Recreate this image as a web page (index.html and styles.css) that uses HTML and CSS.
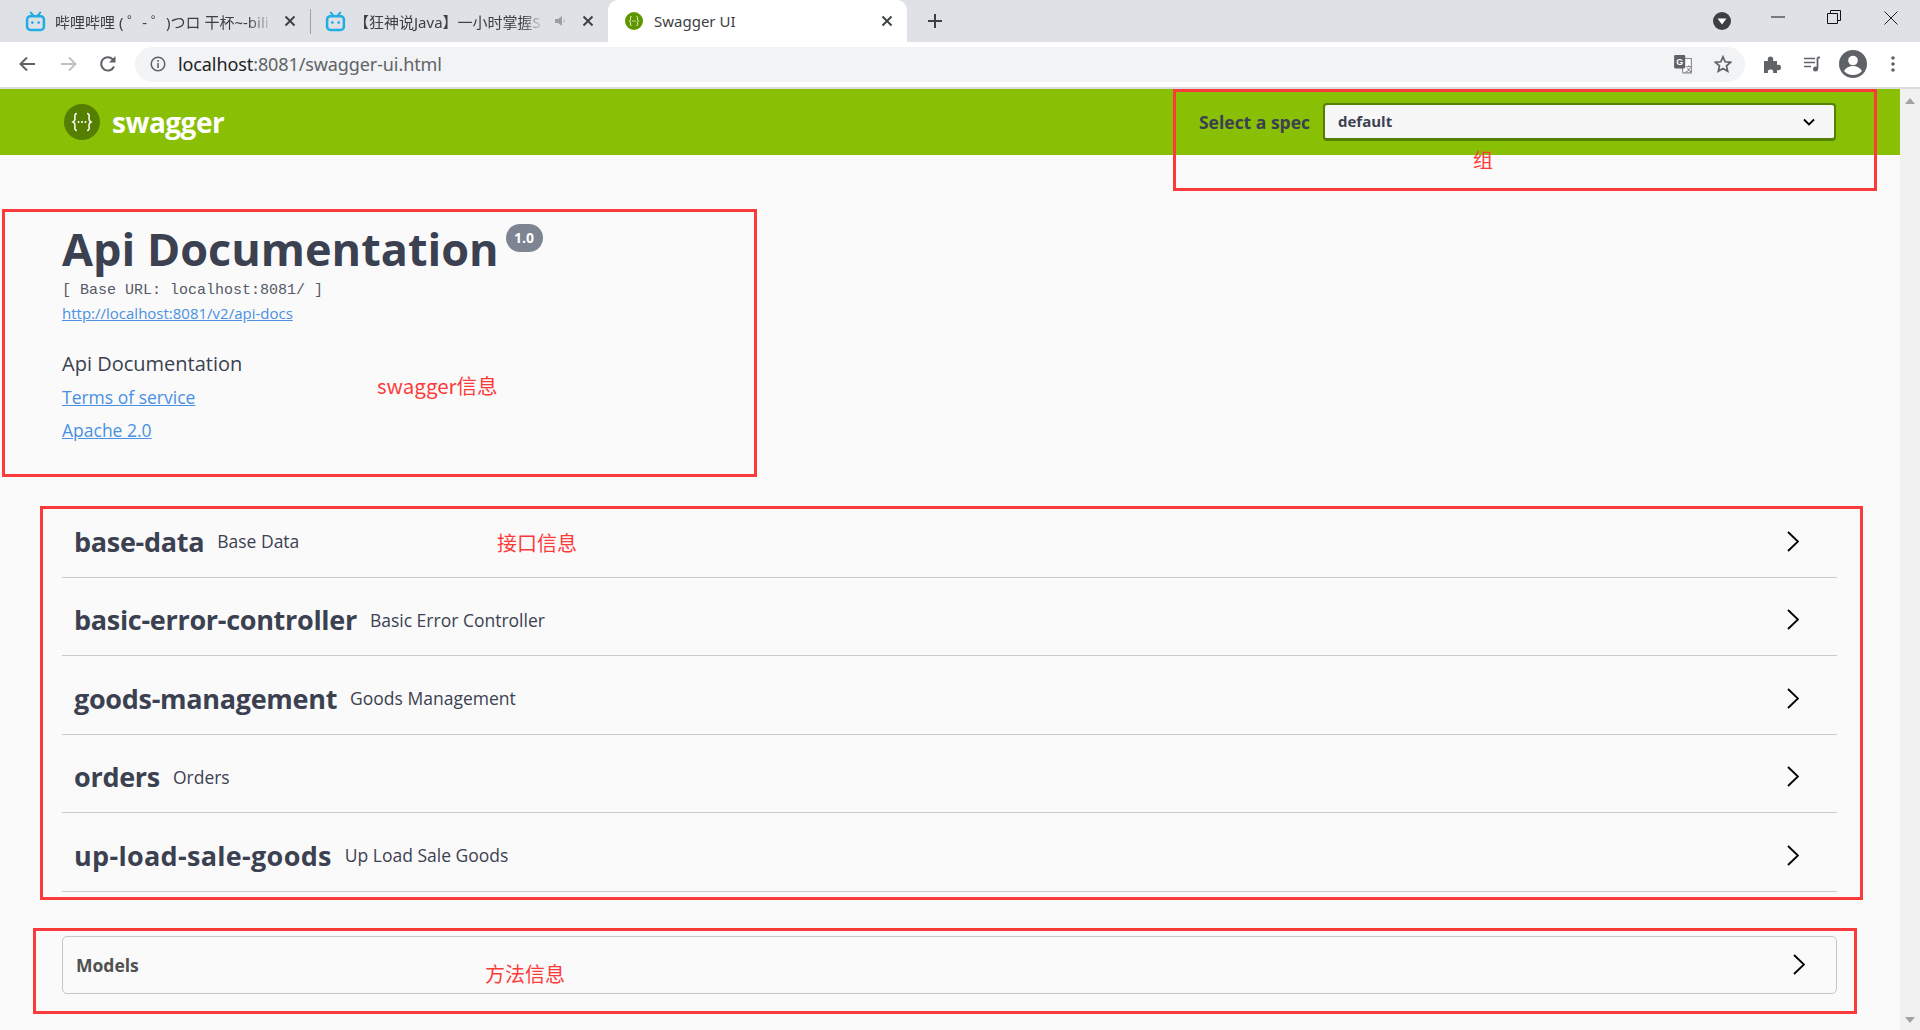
FILE: index.html
```html
<!DOCTYPE html>
<html lang="zh-CN">
<head>
<meta charset="utf-8">
<title>Swagger UI</title>
<link rel="stylesheet" href="styles.css">
</head>
<body>
<svg class="defs" width="0" height="0" aria-hidden="true">
  <symbol id="bili" viewBox="0 0 20 20">
    <path d="M5.5 1.5 8 4.5M14.5 1.5 12 4.5" fill="none" stroke="#23ade5" stroke-width="2" stroke-linecap="round"/>
    <rect x="2" y="5" width="16" height="13" rx="3" fill="none" stroke="#23ade5" stroke-width="2.4"/>
    <circle cx="7" cy="11" r="1.3" fill="#23ade5"/><circle cx="13" cy="11" r="1.3" fill="#23ade5"/>
  </symbol>
  <symbol id="close" viewBox="0 0 12 12">
    <path d="M1.5 1.5 10.500 10.500M10.500 1.500 1.500 10.500" fill="none" stroke="#3c4043" stroke-width="1.9"/>
  </symbol>
  <symbol id="chev" viewBox="0 0 12 21">
    <path d="M1 1 11 10.500 1 20" fill="none" stroke="#000" stroke-width="1.9"/>
  </symbol>
</svg>

<div class="tabstrip">
  <div class="tab tab-first">
    <svg class="fav"><use href="#bili"/></svg>
    <span class="tab-title">哔哩哔哩 ( ゜- ゜)つロ 干杯~-bili</span>
    <svg class="tab-close"><use href="#close"/></svg>
  </div>
  <div class="tab-sep"></div>
  <div class="tab tab-second">
    <svg class="fav"><use href="#bili"/></svg>
    <span class="tab-title">【狂神说Java】一小时掌握S</span>
    <svg class="speaker" viewBox="0 0 14 14"><path d="M1 5h3l4-3v10L4 9H1z" fill="#9aa0a6"/><path d="M10 5v4" stroke="#c4c7cb" stroke-width="1.500"/></svg>
    <svg class="tab-close"><use href="#close"/></svg>
  </div>
  <div class="tab tab-active">
    <svg class="fav-sw" viewBox="0 0 18 18"><circle cx="9" cy="9" r="9" fill="#5f9600"/><path d="M6.500 4.500C5 4.500 5.500 6 5.500 7.500 5.500 8.500 4.500 9 4.500 9s1 .5 1 1.500c0 1.500-.5 3 1 3M11.500 4.500c1.500 0 1 1.500 1 3 0 1 1 1.500 1 1.500s-1 .5-1 1.500c0 1.500.5 3-1 3" fill="none" stroke="#fff" stroke-width="1"/><path d="M7.400 9h.8M8.600 9h.8M9.800 9h.8" stroke="#fff"/></svg>
    <span class="tab-title plain">Swagger UI</span>
    <svg class="tab-close"><use href="#close"/></svg>
  </div>
  <svg class="newtab" viewBox="0 0 14 14"><path d="M7 0v14M0 7h14" stroke="#3c4043" stroke-width="2"/></svg>
  <div class="spring"></div>
  <div class="tabsearch"><svg viewBox="0 0 18 18"><circle cx="9" cy="9" r="9" fill="#3c4043"/><path d="M4.500 6.500h9L9 12.500z" fill="#fff"/></svg></div>
  <div class="winbtn">
    <svg viewBox="0 0 14 14" class="win-min"><path d="M0 7h14" stroke="#111" stroke-width="1"/></svg>
  </div>
  <div class="winbtn">
    <svg viewBox="0 0 14 14" class="win-max"><path d="M.5 3.500h10v10H.5zM3.500 3.500V.5h10v10h-3" fill="none" stroke="#111"/></svg>
  </div>
  <div class="winbtn">
    <svg viewBox="0 0 14 14" class="win-close"><path d="M.5.500l13 13M13.500.5l-13 13" stroke="#222" stroke-width="1"/></svg>
  </div>
</div>

<div class="toolbar">
  <svg class="nav nav-back" viewBox="0 0 18 18"><path d="M17 9H3M9 2.500 2.500 9 9 15.500" fill="none" stroke="#5f6368" stroke-width="2"/></svg>
  <svg class="nav nav-fwd" viewBox="0 0 18 18"><path d="M1 9h14M9 2.500 15.500 9 9 15.500" fill="none" stroke="#bdc1c6" stroke-width="2"/></svg>
  <svg class="nav nav-reload" viewBox="0 0 18 18"><path d="M15 11.500A6.700 6.700 0 1 1 13.700 4.200L15.500 6" fill="none" stroke="#5f6368" stroke-width="2"/><path d="M16.500 1v6.500H10z" fill="#5f6368"/></svg>
  <div class="omnibox">
    <svg class="site-info" viewBox="0 0 16 16"><circle cx="8" cy="8" r="6.800" fill="none" stroke="#5f6368" stroke-width="1.500"/><path d="M8 7v5M8 4v1.700" stroke="#5f6368" stroke-width="1.600"/></svg>
    <span class="url"><b>localhost</b>:8081/swagger-ui.html</span>
    <svg class="omni-ic omni-tr" viewBox="0 0 18 18"><path d="M7 4h9.500v13H9z" fill="#fff" stroke="#80868b"/><rect x="1" y="1" width="10" height="12" rx="1" fill="#5f6368"/><text x="3" y="10" class="tr-g">G</text><text x="11" y="15" class="tr-t">文</text></svg>
    <svg class="omni-ic omni-star" viewBox="0 0 18 18"><path d="M9 1.800 11.200 6.800l5.400.5-4.100 3.600 1.200 5.300L9 13.400l-4.700 2.800 1.200-5.300L1.400 7.300l5.400-.5z" fill="none" stroke="#5f6368" stroke-width="1.700"/></svg>
  </div>
  <svg class="tool tool-puzzle" viewBox="0 0 18 18"><path d="M1 6h4c-.800-3 .5-4.500 2.500-4.500S10.800 3 10 6h4v4c3-.8 4 .5 4 2.500s-1 3.300-4 2.500v3h-4c.8-2.500-.5-3.500-2.500-3.500S4.300 15.500 5 18H1z" fill="#5f6368"/></svg>
  <svg class="tool tool-media" viewBox="0 0 18 18"><path d="M1 3.500h11M1 7.500h11M1 11.500h7" stroke="#5f6368" stroke-width="1.700"/><path d="M14.500 2.500v11" stroke="#5f6368" stroke-width="1.800"/><path d="M14.500 2.500H17" stroke="#5f6368" stroke-width="1.800"/><circle cx="12.500" cy="14" r="2.500" fill="#5f6368"/></svg>
  <svg class="tool tool-profile" viewBox="0 0 28 28"><circle cx="14" cy="14" r="13" fill="#5f6368" stroke="#5f6368" stroke-width="2"/><circle cx="14" cy="10.500" r="4.800" fill="#fff"/><path d="M5 21c2-3.500 5.500-5 9-5s7 1.500 9 5c-2.200 2.500-5.500 4-9 4s-6.800-1.500-9-4z" fill="#fff"/></svg>
  <svg class="tool tool-kebab" viewBox="0 0 4 18"><circle cx="2" cy="3" r="1.800" fill="#5f6368"/><circle cx="2" cy="9" r="1.800" fill="#5f6368"/><circle cx="2" cy="15" r="1.800" fill="#5f6368"/></svg>
</div>

<div class="viewport">
  <main class="page">
    <header class="topbar">
      <div class="brand">
        <svg class="logo" viewBox="0 0 36 36"><circle cx="18" cy="18" r="18" fill="#547f00"/><path d="M13 9.500c-3 0-2 3-2 5.500 0 2-2 3-2 3s2 1 2 3c0 2.500-1 5.500 2 5.500M23 9.500c3 0 2 3 2 5.500 0 2 2 3 2 3s-2 1-2 3c0 2.500 1 5.500-2 5.500" fill="none" stroke="#fff" stroke-width="1.500"/><circle cx="14.500" cy="18" r="1" fill="#fff"/><circle cx="18" cy="18" r="1" fill="#fff"/><circle cx="21.500" cy="18" r="1" fill="#fff"/></svg>
        <span class="brand-name">swagger</span>
      </div>
      <div class="spec">
        <span class="spec-label">Select a spec</span>
        <div class="spec-select">
          <span class="spec-value">default</span>
          <svg class="spec-caret" viewBox="0 0 12 8"><path d="M1 1.500 6 6.500l5-5" fill="none" stroke="#000" stroke-width="1.800"/></svg>
        </div>
      </div>
    </header>

    <section class="api-info">
      <div class="title-line">
        <h1 class="title">Api Documentation</h1>
        <span class="version">1.0</span>
      </div>
      <div class="base-url">[ Base URL: localhost:8081/ ]</div>
      <a class="link link-small" href="#">http://localhost:8081/v2/api-docs</a>
      <p class="desc">Api Documentation</p>
      <a class="link link-big" href="#">Terms of service</a>
      <a class="link link-big" href="#">Apache 2.0</a>
    </section>

    <section class="tags">
      <div class="tag"><span class="tag-name">base-data</span><span class="tag-desc">Base Data</span><svg class="chev"><use href="#chev"/></svg></div>
      <div class="tag"><span class="tag-name">basic-error-controller</span><span class="tag-desc">Basic Error Controller</span><svg class="chev"><use href="#chev"/></svg></div>
      <div class="tag"><span class="tag-name">goods-management</span><span class="tag-desc">Goods Management</span><svg class="chev"><use href="#chev"/></svg></div>
      <div class="tag"><span class="tag-name">orders</span><span class="tag-desc">Orders</span><svg class="chev"><use href="#chev"/></svg></div>
      <div class="tag"><span class="tag-name tag-name-wide">up-load-sale-goods</span><span class="tag-desc">Up Load Sale Goods</span><svg class="chev"><use href="#chev"/></svg></div>
    </section>

    <section class="models">
      <span class="models-title">Models</span>
      <svg class="chev"><use href="#chev"/></svg>
    </section>

    <div class="mark mark-group"></div>
    <div class="mark mark-info"></div>
    <div class="mark mark-api"></div>
    <div class="mark mark-models"></div>
    <span class="note note-group">组</span>
    <span class="note note-info">swagger信息</span>
    <span class="note note-api">接口信息</span>
    <span class="note note-models">方法信息</span>
  </main>
  <aside class="scrollbar">
    <span class="arrow arrow-up"></span>
    <span class="arrow arrow-down"></span>
  </aside>
</div>
</body>
</html>
```

FILE: styles.css
```css
* { box-sizing: border-box; }
html, body { margin: 0; padding: 0; height: 100%; overflow: hidden; }
body {
  font-family: "Open Sans", "Noto Sans CJK SC", sans-serif;
  color: #3b4151;
  background: #fff;
  display: flex;
  flex-direction: column;
  height: 1030px;
}
.defs { position: absolute; }

/* Browser tab strip */
.tabstrip {
  height: 42px;
  flex: none;
  background: #dee1e6;
  display: flex;
  align-items: center;
}
.tab {
  height: 42px;
  display: flex;
  align-items: center;
  flex: none;
  font-family: "Noto Sans", "Noto Sans CJK SC", sans-serif;
  font-size: 15px;
  color: #3c4043;
}
.tab-first { width: 300px; margin-left: 10px; padding: 0 14px 0 15px; }
.tab-second { width: 297px; padding: 0 14px 0 14px; }
.tab-sep { width: 1px; height: 25px; background: #9aa0a6; flex: none; }
.tab-active {
  width: 299px;
  padding: 0 14px 0 17px;
  background: #fff;
  border-radius: 10px 10px 0 0;
}
.fav { width: 21px; height: 21px; flex: none; }
.fav-sw { width: 18px; height: 18px; flex: none; }
.tab-title {
  flex: 1;
  white-space: nowrap;
  margin-left: 9px;
  -webkit-mask-image: linear-gradient(to right, #000 88%, transparent 100%);
  mask-image: linear-gradient(to right, #000 88%, transparent 100%);
}
.tab-title.plain { margin-left: 11px; -webkit-mask-image: none; mask-image: none; }
.tab-first .tab-title { margin-right: 10px; }
.tab-second .tab-title { margin-left: 8px; margin-right: 10px; }
.speaker { width: 14px; height: 14px; flex: none; margin-right: 14px; }
.tab-close { width: 12px; height: 12px; flex: none; }
.newtab { width: 14px; height: 14px; margin-left: 21px; flex: none; }
.spring { flex: 1; }
.tabsearch { width: 18px; height: 18px; margin-right: 19px; }
.tabsearch svg { width: 18px; height: 18px; display: block; }
.winbtn { width: 56px; height: 42px; display: flex; align-items: center; justify-content: center; flex: none; }
.winbtn svg { width: 14px; height: 14px; display: block; margin-bottom: 8px; }
.winbtn:last-child { width: 58px; }
.winbtn .win-close { margin-bottom: 6px; }

/* Browser toolbar */
.toolbar {
  height: 47px;
  flex: none;
  background: #fff;
  border-bottom: 2px solid #dadce0;
  display: flex;
  align-items: center;
  padding-bottom: 1px;
}
.nav { width: 18px; height: 18px; flex: none; }
.nav-back { margin-left: 18px; }
.nav-fwd { margin-left: 24px; }
.nav-reload { margin-left: 21px; }
.omnibox {
  flex: none;
  width: 1610px;
  height: 35px;
  margin-left: 18px;
  border-radius: 18px;
  background: #f1f3f4;
  display: flex;
  align-items: center;
  padding-left: 15px;
}
.site-info { width: 16px; height: 16px; flex: none; }
.url {
  margin-left: 12px;
  flex: 1;
  font-family: "Noto Sans", sans-serif;
  font-size: 18px;
  letter-spacing: -0.1px;
  color: #5f6368;
}
.url b { font-weight: 400; color: #202124; }
.omni-ic { flex: none; }
.omni-tr { width: 20px; height: 20px; margin-right: 21px; }
.omni-star { width: 18px; height: 18px; margin-right: 13px; }
.tr-g { font: bold 8px "Liberation Sans", sans-serif; fill: #fff; }
.tr-t { font: 6px "Noto Sans CJK SC", sans-serif; fill: #5f6368; }
.tool { flex: none; }
.tool-puzzle { width: 18px; height: 18px; margin-left: 18px; }
.tool-media { width: 18px; height: 18px; margin-left: 22px; }
.tool-profile { width: 28px; height: 28px; margin-left: 18px; }
.tool-kebab { width: 4px; height: 18px; margin-left: 24px; }

/* Page */
.viewport { flex: 1; min-height: 0; display: flex; }
.page {
  flex: 1;
  min-width: 0;
  background: #fafafa;
  position: relative;
}
.scrollbar {
  width: 20px;
  flex: none;
  background: #f1f1f1;
  display: flex;
  flex-direction: column;
  justify-content: space-between;
  align-items: center;
  padding: 9px 0 7px;
}
.arrow { width: 0; height: 0; border-left: 5px solid transparent; border-right: 5px solid transparent; }
.arrow-up { border-bottom: 6px solid #a3a3a3; }
.arrow-down { border-top: 6px solid #a3a3a3; }

/* Swagger top bar */
.topbar {
  height: 66px;
  background: #89bf04;
  display: flex;
  align-items: center;
  justify-content: space-between;
  padding: 0 64px;
}
.brand { display: flex; align-items: center; gap: 12px; }
.logo { width: 36px; height: 36px; display: block; }
.brand-name { font-size: 28px; font-weight: 700; color: #fff; line-height: 36px; letter-spacing: -0.5px; }
.spec { display: flex; align-items: center; gap: 13px; }
.spec-label { font-size: 17.500px; font-weight: 700; color: #3b4151; white-space: nowrap; }
.spec-select {
  width: 513px;
  height: 38px;
  background: #f7f7f7;
  border: 2px solid #547f00;
  border-bottom-width: 3px;
  border-radius: 4px;
  display: flex;
  align-items: center;
  justify-content: space-between;
  padding: 0 19px 0 13px;
  font-size: 15px;
  font-weight: 700;
  color: #3b4151;
}
.spec-value { margin-bottom: 1px; }
.spec-caret { width: 12px; height: 8px; display: block; }

/* Info */
.api-info { padding: 71px 0 0 62px; height: 344px; }
.title-line { display: flex; align-items: flex-start; height: 48px; }
.title {
  margin: 0;
  font-size: 45px;
  font-weight: 700;
  line-height: 46px;
  color: #3b4151;
  white-space: nowrap;
}
.version {
  margin: -2px 0 0 7px;
  width: 37px;
  height: 28px;
  border-radius: 14px;
  background: #7d8492;
  color: #fff;
  font-size: 14px;
  font-weight: 700;
  line-height: 28px;
  text-align: center;
}
.base-url {
  margin-top: 8px;
  font-family: "Liberation Mono", monospace;
  font-size: 15px;
  line-height: 18px;
  color: #555a66;
  white-space: pre;
}
.link { display: table; color: #4990e2; text-decoration: underline; }
.link-small { margin-top: 4px; font-size: 15px; line-height: 18px; }
.desc { margin: 33px 0 0; font-size: 20px; line-height: 18px; color: #3b4151; }
.link-big { margin-top: 15px; font-size: 17.500px; line-height: 18px; }

/* Tags */
.tags { padding: 0 63px 0 62px; }
.tag {
  height: 78.500px;
  border-bottom: 1.500px solid #c8cacd;
  display: flex;
  align-items: center;
  padding: 7px 38px 0 12px;
}
.tag-name { font-size: 27px; font-weight: 700; color: #3b4151; white-space: nowrap; letter-spacing: -0.3px; }
.tag-name-wide { letter-spacing: 0.3px; }
.tag-desc { margin-left: 13px; flex: 1; font-size: 17.500px; color: #3b4151; white-space: nowrap; }
.chev { width: 12px; height: 21px; flex: none; }

/* Models */
.models {
  margin: 44px 63px 0 62px;
  height: 58px;
  border: 1px solid #c4c6cb;
  border-radius: 5px;
  display: flex;
  align-items: center;
  justify-content: space-between;
  padding: 0 31px 0 13px;
}
.models-title { font-size: 17.500px; font-weight: 700; color: #505050; }

/* Screenshot annotations, drawn over the page */
.mark { position: absolute; border: 3px solid #fd3a3a; pointer-events: none; }
.mark-group { left: 1173px; top: 0; width: 704px; height: 102px; }
.mark-info { left: 2px; top: 120px; width: 755px; height: 268px; }
.mark-api { left: 40px; top: 417px; width: 1823px; height: 394px; }
.mark-models { left: 33px; top: 839px; width: 1824px; height: 86px; }
.note {
  position: absolute;
  font-family: "Noto Sans CJK SC", sans-serif;
  font-size: 20px;
  line-height: 24px;
  color: #fd3a3a;
  white-space: nowrap;
}
.note-group { left: 1473px; top: 59px; }
.note-info { left: 377px; top: 284px; font-size: 20.500px; }
.note-api { left: 497px; top: 442px; }
.note-models { left: 485px; top: 873px; }
```
